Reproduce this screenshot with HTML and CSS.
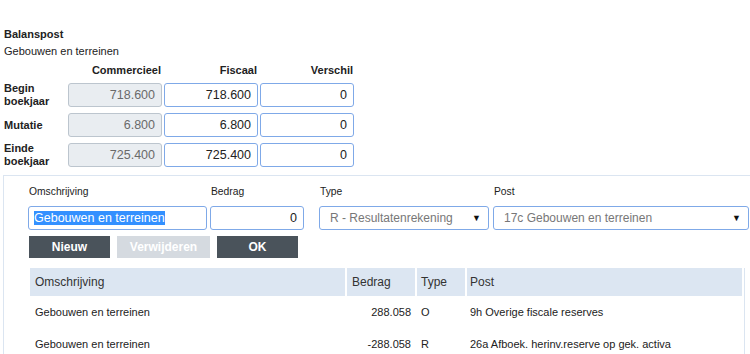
FILE: index.html
```html
<!DOCTYPE html>
<html>
<head>
<meta charset="utf-8">
<link rel="stylesheet" href="styles.css">
</head>
<body>
<div class="top">
  <div class="title">Balanspost</div>
  <div class="subtitle">Gebouwen en terreinen</div>
  <div class="grid">
    <div></div>
    <div class="colhead">Commercieel</div>
    <div class="colhead">Fiscaal</div>
    <div class="colhead">Verschil</div>

    <div class="rowlabel">Begin<br>boekjaar</div>
    <div class="field disabled">718.600</div>
    <div class="field">718.600</div>
    <div class="field">0</div>

    <div class="rowlabel">Mutatie</div>
    <div class="field disabled">6.800</div>
    <div class="field">6.800</div>
    <div class="field">0</div>

    <div class="rowlabel">Einde<br>boekjaar</div>
    <div class="field disabled">725.400</div>
    <div class="field">725.400</div>
    <div class="field">0</div>
  </div>
</div>

<div class="panel">
  <div class="form">
    <div class="fg f-oms">
      <div class="flabel">Omschrijving</div>
      <div class="field left"><span class="sel">Gebouwen en terreinen</span></div>
    </div>
    <div class="fg f-bed">
      <div class="flabel">Bedrag</div>
      <div class="field">0</div>
    </div>
    <div class="fg f-type">
      <div class="flabel">Type</div>
      <div class="field select"><span>R - Resultatenrekening</span><span class="arrow">▼</span></div>
    </div>
    <div class="fg f-post">
      <div class="flabel">Post</div>
      <div class="field select"><span>17c Gebouwen en terreinen</span><span class="arrow">▼</span></div>
    </div>
  </div>
  <div class="buttons">
    <div class="btn b-nieuw">Nieuw</div>
    <div class="btn b-verw disabled-btn">Verwijderen</div>
    <div class="btn b-ok">OK</div>
  </div>
  <div class="tablewrap">
    <div class="trow thead">
      <div class="c1">Omschrijving</div>
      <div class="c2">Bedrag</div>
      <div class="c3">Type</div>
      <div class="c4">Post</div>
    </div>
    <div class="trow tbody">
      <div class="c1">Gebouwen en terreinen</div>
      <div class="c2 num">288.058</div>
      <div class="c3">O</div>
      <div class="c4">9h Overige fiscale reserves</div>
    </div>
    <div class="trow tbody">
      <div class="c1">Gebouwen en terreinen</div>
      <div class="c2 num">-288.058</div>
      <div class="c3">R</div>
      <div class="c4">26a Afboek. herinv.reserve op gek. activa</div>
    </div>
  </div>
</div>
</body>
</html>
```

FILE: styles.css
```css
* { box-sizing: border-box; }
html, body { margin: 0; padding: 0; background: #fff; }
body {
  width: 750px;
  height: 354px;
  overflow: hidden;
  font-family: "Liberation Sans", Arial, sans-serif;
  color: #222;
}
.top { padding: 27px 0 0 4px; }
.title { font-size: 11px; font-weight: bold; line-height: 14px; }
.subtitle { font-size: 11px; line-height: 14px; margin-top: 3px; }
.grid {
  margin-top: 5px;
  display: grid;
  grid-template-columns: 62px 94px 94px 94px;
  grid-template-rows: 14px 24px 24px 24px;
  column-gap: 2px;
  row-gap: 6px;
}
.colhead {
  font-size: 11px;
  font-weight: bold;
  line-height: 14px;
  text-align: right;
  padding-right: 1px;
}
.rowlabel {
  font-size: 11px;
  font-weight: bold;
  line-height: 13px;
  align-self: center;
}
.field {
  height: 24px;
  border: 1px solid #7fa9e8;
  border-radius: 3px;
  background: #fff;
  font-size: 12.5px;
  line-height: 22px;
  text-align: right;
  padding: 0 6px;
  color: #222;
  white-space: nowrap;
  overflow: hidden;
}
.field.disabled {
  background: #e9edf1;
  border-color: #bcc5ce;
  color: #6a6a6a;
}
.field.left { text-align: left; padding-left: 5px; }
.sel { background: #3390ff; color: #fff; }
.field.select {
  display: flex;
  justify-content: space-between;
  align-items: center;
  text-align: left;
  padding: 0 7px 0 10px;
  color: #777;
  font-size: 12px;
}
.arrow { color: #111; font-size: 9px; }

.panel {
  margin: 8px 0 0 3px;
  border-top: 1px solid #dbe5f1;
  border-left: 1px solid #dbe5f1;
  padding: 9px 0 0 24px;
}
.form { display: flex; }
.fg { display: flex; flex-direction: column; }
.flabel { font-size: 10.3px; line-height: 14px; padding-left: 1px; margin-bottom: 7px; color: #222; }
.f-oms { width: 179px; margin-right: 3px; }
.f-bed { width: 94px; margin-right: 15px; }
.f-type { width: 170px; margin-right: 4px; }
.f-post { width: 256px; }

.buttons { display: flex; gap: 7px; margin: 6px 0 0 1px; }
.btn {
  height: 22px;
  line-height: 22px;
  text-align: center;
  font-size: 12px;
  font-weight: bold;
  color: #fff;
  background: #4a535b;
}
.b-nieuw { width: 81px; }
.b-verw { width: 93px; }
.b-ok { width: 81px; }
.disabled-btn { background: #d5dae0; }

.tablewrap {
  margin: 10px 0 0 2px;
  width: 715px;
  height: 86px;
  overflow: hidden;
  padding-right: 2px;
  border-right: 1px solid #dbe5f1;
}
.trow {
  display: grid;
  grid-template-columns: 315px 68px 48px 275px;
  column-gap: 2px;
  width: 712px;
}
.thead {
  height: 28px;
  font-size: 12px;
  line-height: 28px;
  color: #333;
}
.thead > div { background: #dce6f2; }
.tbody {
  height: 32px;
  font-size: 11px;
  line-height: 32px;
  color: #222;
}
.c1 { padding-left: 5px; }
.c2 { padding-left: 5px; }
.c2.num { text-align: right; padding-right: 4px; padding-left: 0; }
.c3 { padding-left: 4px; }
.c4 { padding-left: 3px; white-space: nowrap; }
```
